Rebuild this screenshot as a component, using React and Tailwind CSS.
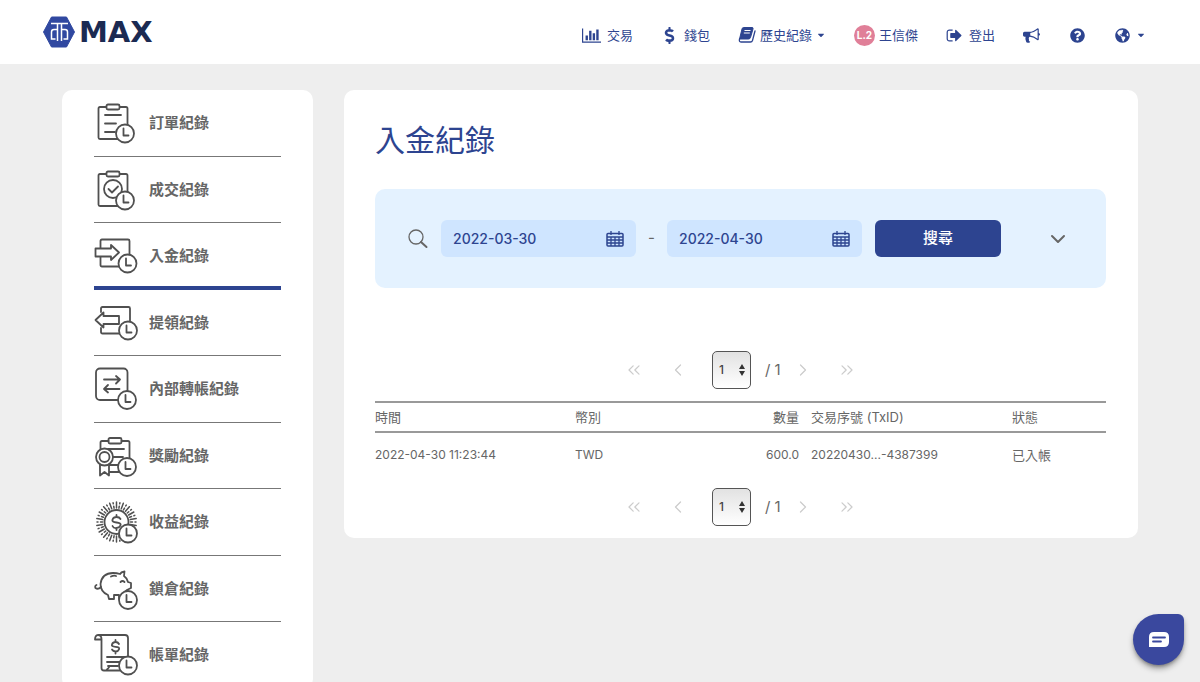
import React, { useState } from "react";
import clsx from "clsx";
import { FaDollarSign, FaQuestionCircle, FaGlobeAmericas, FaCaretDown } from "react-icons/fa";
import { ChevronDown, ChevronLeft, ChevronRight, ChevronsLeft, ChevronsRight } from "lucide-react";

const rays = Array.from({ length: 36 }, (_, i) => i * 10);

function BarChartIcon() {
  return (
    <svg viewBox="0 0 2048 1792" className="h-[17px] w-[19px]" fill="currentColor">
      <path d="M640 896v512h-256v-512h256zm384-512v1024h-256v-1024h256zm1024 1152v128h-2048v-1536h128v1408h1920zm-640-896v768h-256v-768h256zm384-384v1152h-256v-1152h256z" />
    </svg>
  );
}

function BookIcon() {
  return (
    <svg viewBox="0 0 18 18" className="size-[18px]" fill="none">
      <path d="M5.500 1.500H14q1.500 0 1 1.500l-2.500 8.500q-.500 1.500-2 1.500H1.500L4 3q.300-1.500 1.500-1.500z" fill="currentColor" stroke="currentColor" strokeLinejoin="round" />
      <path d="M6.500 4.500h6M5.800 7h6" stroke="#fff" />
      <path d="M1.500 13q-.700 3 1.500 3h9.500q1.500 0 2-1.500L17 5" stroke="currentColor" strokeWidth="1.300" strokeLinecap="round" />
    </svg>
  );
}

function SignOutIcon() {
  return (
    <svg viewBox="0 0 1792 1792" className="size-[17px]" fill="currentColor">
      <path d="M704 1440q0 4 1 20t.5 26.5-3 23.5-10 19.5-20.5 6.5h-320q-119 0-203.5-84.5t-84.5-203.5v-704q0-119 84.5-203.5t203.5-84.5h320q13 0 22.5 9.5t9.5 22.5q0 4 1 20t.5 26.5-3 23.5-10 19.5-20.5 6.5h-320q-66 0-113 47t-47 113v704q0 66 47 113t113 47h312l11.5 1 11.5 3 8 5.5 7 9 2 13.5zm928-544q0 26-19 45l-544 544q-19 19-45 19t-45-19-19-45v-288h-448q-26 0-45-19t-19-45v-384q0-26 19-45t45-19h448v-288q0-26 19-45t45-19 45 19l544 544q19 19 19 45z" />
    </svg>
  );
}

function BullhornIcon() {
  return (
    <svg viewBox="0 0 1792 1792" className="size-[17px]" fill="currentColor">
      <path d="M1664 640q53 0 90.5 37.5t37.5 90.5-37.5 90.5-90.5 37.5v384q0 52-38 90t-90 38q-417-347-812-380-58 19-91 66t-31 100.5 40 92.5q-20 33-23 65.5t6 58 33.5 55 48 50 61.5 50.5q-29 58-111.5 83t-168.5 11.5-132-55.5q-7-23-29.5-87.5t-32-94.5-23-89-15-101 3.5-98.5 22-110.5h-122q-66 0-113-47t-47-113v-192q0-66 47-113t113-47h480q435 0 896-384 52 0 90 38t38 90v384zm-128 604v-954q-394 302-768 343v270q377 42 768 341z" />
    </svg>
  );
}

function Logo() {
  return (
    <a href="#" aria-label="MAX" className="flex items-center gap-1">
      <svg viewBox="0 0 32 32" className="h-8 w-8">
        <path d="M8.500 1h15L31.500 16l-8 15h-15L.500 16z" fill="#3048a0" stroke="#3048a0" strokeLinejoin="round" />
        <g fill="none" stroke="#fff" strokeWidth="1.500">
          <path d="M8 7.500h17M14.500 8v17M18.500 8v17M14 13.500h-3q-2.500 0-2.500 2.500v7h4M19 13.500h3q2.500 0 2.500 2.500v7h-4" />
        </g>
      </svg>
      <span className="font-['DejaVu_Sans'] text-[29px] leading-8 font-bold text-[#1b2a52]">MAX</span>
    </a>
  );
}

function Clock({ x, y }) {
  return (
    <>
      <circle cx={x} cy={y} r="9" fill="#fff" />
      <path d={`M${x - 1.5} ${y - 5}v7h5`} />
    </>
  );
}

function RecordIcon({ children }) {
  return (
    <svg viewBox="1 0 44 44" className="size-11 shrink-0" fill="none" stroke="#505050" strokeWidth="1.8" strokeLinejoin="round" strokeLinecap="round">
      {children}
    </svg>
  );
}

const records = [
  {
    name: "訂單紀錄",
    icon: (
      <>
        <path d="M13 6H7q-1.500 0-1.500 1.500v29Q5.500 38 7 38h26q1.500 0 1.500-1.500v-29Q34.500 6 33 6h-6M12 14h16M12 22.500h11M12 31h10" />
        <rect x="13.500" y="3.500" width="13" height="5" rx="1.500" />
        <Clock x={32} y={32.5} />
      </>
    ),
  },
  {
    name: "成交紀錄",
    icon: (
      <>
        <path d="M13 6H7q-1.500 0-1.500 1.500v29Q5.500 38 7 38h26q1.500 0 1.500-1.500v-29Q34.500 6 33 6h-6" />
        <rect x="13.500" y="3.500" width="13" height="5" rx="1.500" />
        <circle cx="20" cy="21" r="9" />
        <path d="M15.500 21l3.500 3.500 6-6" />
        <Clock x={32} y={32.5} />
      </>
    ),
  },
  {
    name: "入金紀錄",
    icon: (
      <>
        <path d="M7.500 14V7q0-1.500 1.500-1.500h26q1.500 0 1.500 1.500v24q0 1.500-1.500 1.500H9q-1.500 0-1.500-1.500v-8" />
        <path d="M2.500 14.500h15.500v-3.500l8 7.500-8 7.500v-3.500H2.500z" />
        <Clock x={34.5} y={29.5} />
      </>
    ),
  },
  {
    name: "提領紀錄",
    icon: (
      <>
        <path d="M8 11V7.500Q8 6 9.500 6h26Q37 6 37 7.500v23.500q0 1.500-1.500 1.500h-26Q8 32.500 8 31v-4" />
        <path d="M26 15H10.500v-3.500L2.500 19l8 7.500V23H26z" />
        <Clock x={35} y={29.5} />
      </>
    ),
  },
  {
    name: "內部轉帳紀錄",
    icon: (
      <>
        <rect x="3" y="1.500" width="31.500" height="31.500" rx="4" />
        <path d="M11 12.500h16M23 9l4 3.500-4 4M26.500 22H11M15 18l-4 4 4 3.500" />
        <Clock x={34} y={33} />
      </>
    ),
  },
  {
    name: "獎勵紀錄",
    icon: (
      <>
        <path d="M15.500 7H9Q7.500 7 7.500 8.500V34q0 4 1.500 4h26q1.500 0 1.500-1.500v-28Q36.500 7 35 7h-6.500M15 15h16M20 23h10M16 31h9" />
        <rect x="15.500" y="4" width="13" height="5.500" rx="1.500" />
        <path d="M7 29v12.500l4.500-3.500 4.500 3.500V29" fill="#fff" />
        <circle cx="11.500" cy="23" r="8.500" fill="#fff" />
        <circle cx="11.500" cy="23" r="5" />
        <Clock x={34} y={33} />
      </>
    ),
  },
  {
    name: "收益紀錄",
    icon: (
      <>
        <circle cx="23.500" cy="22" r="12" />
        {rays.map((deg) => (
          <path key={deg} d={deg % 20 === 0 ? "M23.500 8V2" : "M23.500 8V6M23.500 3.500V2.500"} strokeWidth="1.500" transform={`rotate(${deg} 23.500 22)`} />
        ))}
        <path d="M27.500 19q-1-2-4-2t-4 2.500 4 3 4 2.800-4 2.700-4-2M23.500 15v2M23.500 28v2" />
        <Clock x={35} y={33.5} />
      </>
    ),
  },
  {
    name: "鎖倉紀錄",
    icon: (
      <>
        <path d="M7.500 17Q9 6 20 6q4 0 7 1 1-2 4.500-2.500L31 9q3 2 4 6l3 1v5l-4 2-3 3v6h-5v-4h-5v4h-5l-1-4Q7.500 25 7.500 17z" />
        <path d="M8 20Q5 23 2.500 21q-1-2 1-3M18 9.500q3-1.500 5-.500M27.500 15q2-2 4 0" />
        <Clock x={35} y={33} />
      </>
    ),
  },
  {
    name: "帳單紀錄",
    icon: (
      <>
        <path d="M5 2h27q3 0 3 3v31q0 1.500-1.500 1.500H11Q8.500 37.500 8.500 35V6Q8.500 2 5 2 2 2 2 6.500h6.500M14 24h20M14 29h14M14 36.500q4-3.500 1-3.500h10" />
        <path d="M26 11q-1-2-3.500-2T19 11.300t3.500 2.500 3.500 2.500-3.500 2.200-3.500-2M22.500 7v2M22.500 18.500v2" />
        <Clock x={35} y={32.5} />
      </>
    ),
  },
];

const transactions = [
  { time: "2022-04-30 11:23:44", currency: "TWD", amount: "600.0", txid: "20220430...-4387399", status: "已入帳" },
];

function Header() {
  return (
    <header className="flex h-16 items-center justify-between bg-white pr-[54px] pl-[43px]">
      <Logo />
      <nav className="mt-1.5 flex items-center gap-7 text-[13px] leading-5 text-[#2d4490]">
        <a href="#" className="flex items-center gap-1.5">
          <BarChartIcon />
          交易
        </a>
        <a href="#" className="flex items-center gap-1.5">
          <FaDollarSign className="size-[17px]" />
          錢包
        </a>
        <button className="flex items-center gap-1">
          <BookIcon />
          歷史紀錄
          <FaCaretDown className="size-2.5" />
        </button>
        <a href="#" className="flex items-center gap-1">
          <span className="flex size-[21px] items-center justify-center rounded-full bg-[#e07f98] text-[10px] font-bold text-white">L.2</span>
          王信傑
        </a>
        <button className="flex items-center gap-1.5">
          <SignOutIcon />
          登出
        </button>
        <button aria-label="公告"><BullhornIcon /></button>
        <button aria-label="說明" className="px-0.5"><FaQuestionCircle className="size-[15px]" /></button>
        <button aria-label="語言" className="flex items-center gap-1.5">
          <FaGlobeAmericas className="size-[15px]" />
          <FaCaretDown className="size-2.5" />
        </button>
      </nav>
    </header>
  );
}

function Sidebar() {
  return (
    <aside className="w-[251px] shrink-0 rounded-[10px] bg-white px-8">
      <ul>
        {records.map((record) => (
          <li
            key={record.name}
            className={clsx(
              "odd:h-[67px] even:h-[66px]",
              record.name === "入金紀錄" ? "border-b-4 border-[#2d4490]" : "border-b border-[#777]"
            )}
          >
            <a href="#" className="flex h-[66px] items-center gap-[11px] text-[15px] font-bold text-[#666]">
              <RecordIcon>{record.icon}</RecordIcon>
              {record.name}
            </a>
          </li>
        ))}
      </ul>
    </aside>
  );
}

function CalendarIcon() {
  return (
    <svg viewBox="0 0 18 16" className="h-4 w-[18px]" fill="none" stroke="currentColor" strokeWidth="1.500">
      <rect x="1" y="2.500" width="16" height="12.500" rx="1" />
      <path d="M1 6h16M1 9h16M1 12h16M5 6v9M9 6v9M13 6v9M5 0v4M13 0v4" strokeWidth="1.300" />
    </svg>
  );
}

function DateField({ label, value, onChange }) {
  return (
    <label className="flex h-[37px] w-[195px] items-center rounded-md bg-[#cfe5ff] px-3 text-[#2d4490]">
      <input
        aria-label={label}
        value={value}
        onChange={(e) => onChange(e.target.value)}
        className="min-w-0 flex-1 bg-transparent text-sm font-medium outline-none"
      />
      <CalendarIcon />
    </label>
  );
}

function SearchBar() {
  const [from, setFrom] = useState("2022-03-30");
  const [to, setTo] = useState("2022-04-30");

  return (
    <form className="mt-[31px] flex items-center rounded-[10px] bg-[#e4f2ff] py-[31px] pr-9 pl-[33px]">
      <svg viewBox="0 0 20 20" className="mr-[13px] size-5" fill="none" stroke="#666" strokeLinecap="round">
        <circle cx="8" cy="8" r="7" strokeWidth="1.300" />
        <path d="M13 13l5.500 5" strokeWidth="2" />
      </svg>
      <DateField label="開始日期" value={from} onChange={setFrom} />
      <span className="w-[31px] text-center text-[15px] text-[#666]">-</span>
      <DateField label="結束日期" value={to} onChange={setTo} />
      <button type="button" className="ml-[13px] h-[37px] w-[126px] rounded-md bg-[#2d4490] text-[15px] font-medium text-white">
        搜尋
      </button>
      <button type="button" aria-label="更多條件" className="ml-auto text-[#666]">
        <ChevronDown className="size-6" />
      </button>
    </form>
  );
}

function Pager() {
  return (
    <div className="flex items-center justify-center text-[#ccc]">
      <button aria-label="第一頁" className="flex w-11 justify-center"><ChevronsLeft className="size-5" strokeWidth={1.5} /></button>
      <button aria-label="上一頁" className="flex w-11 justify-center"><ChevronLeft className="size-5" strokeWidth={1.5} /></button>
      <div className="relative ml-3">
        <select
          aria-label="頁數"
          className="block h-[38px] w-[39px] appearance-none rounded-[5px] border border-[#555] bg-linear-to-b from-[#e2e2e2] to-white pl-1.5 text-xs font-medium text-[#444]"
        >
          <option>1</option>
        </select>
        <svg viewBox="0 0 6 12" className="pointer-events-none absolute top-[13px] right-1.5 h-3 w-1.5" fill="#333">
          <path d="M0 5l3-5 3 5zM0 7h6l-3 5z" />
        </svg>
      </div>
      <span className="ml-3.5 w-4 text-[15px] whitespace-nowrap text-[#666]">/ 1</span>
      <button aria-label="下一頁" className="flex w-11 justify-center"><ChevronRight className="size-5" strokeWidth={1.5} /></button>
      <button aria-label="最後一頁" className="flex w-11 justify-center"><ChevronsRight className="size-5" strokeWidth={1.5} /></button>
    </div>
  );
}

function DepositTable() {
  return (
    <table className="my-3 w-full table-fixed text-left text-[13px] leading-5 text-[#666]">
      <thead className="border-y-2 border-[#999]">
        <tr className="h-[30px]">
          <th className="w-[200px] font-normal">時間</th>
          <th className="w-[112px] font-normal">幣別</th>
          <th className="w-[112px] text-right font-normal">數量</th>
          <th className="w-[213px] pl-3 font-normal">交易序號 (TxID)</th>
          <th className="font-normal">狀態</th>
        </tr>
      </thead>
      <tbody>
        {transactions.map((tx) => (
          <tr key={tx.txid} className="h-11">
            <td className="text-xs">{tx.time}</td>
            <td className="text-xs">{tx.currency}</td>
            <td className="text-right text-xs">{tx.amount}</td>
            <td className="pl-3 text-xs">{tx.txid}</td>
            <td>{tx.status}</td>
          </tr>
        ))}
      </tbody>
    </table>
  );
}

export default function App() {
  return (
    <div className="min-h-screen bg-[#eee] font-['Inter','Noto_Sans_CJK_TC',sans-serif]">
      <Header />
      <div className="flex items-start gap-[31px] px-[62px] pt-[26px]">
        <Sidebar />
        <main className="min-w-0 flex-1 rounded-[10px] bg-white pt-8 pr-8 pb-3 pl-[31px]">
          <h1 className="text-[30px] leading-9 text-[#2d4490]">入金紀錄</h1>
          <SearchBar />
          <div className="mt-[63px]">
            <Pager />
            <DepositTable />
            <Pager />
          </div>
        </main>
      </div>

      <button
        aria-label="客服"
        className="fixed right-4 bottom-[17px] flex size-[51px] items-center justify-center rounded-[26px] rounded-tr-md bg-[#3a489e] shadow-md shadow-black/40"
      >
        <svg viewBox="0 0 20 15" className="h-[15px] w-5">
          <path d="M5 0h10q5 0 5 5v5q0 5-5 5H0V5q0-5 5-5z" fill="#fff" />
          <path d="M4 5.500h12M4 9.500h8" stroke="#3a489e" strokeWidth="1.800" strokeLinecap="round" />
        </svg>
      </button>
    </div>
  );
}
